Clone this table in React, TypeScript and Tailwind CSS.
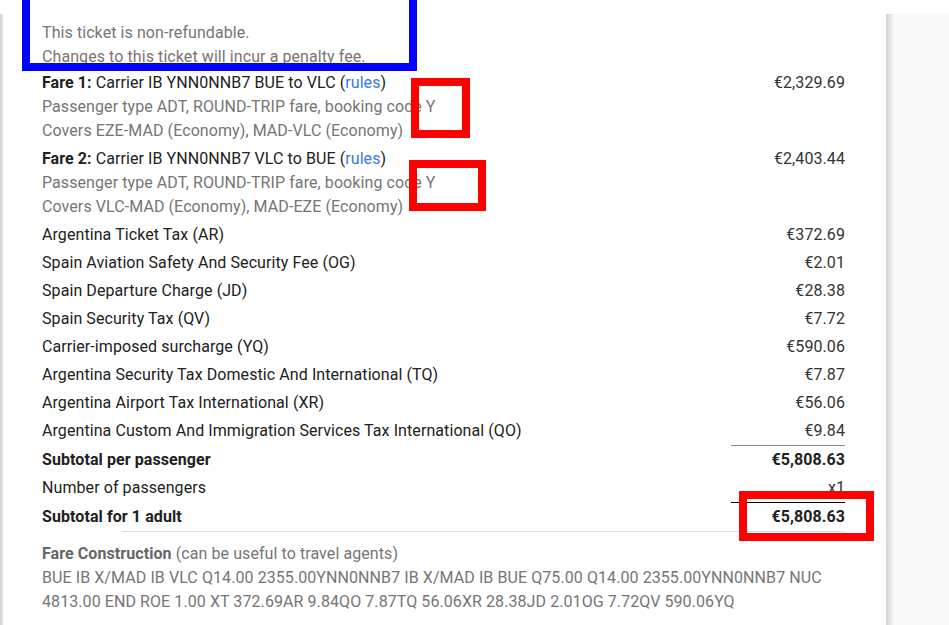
import React from "react";

type Row = { label: string; amount: string };

const TAXES: Row[] = [
  { label: "Argentina Ticket Tax (AR)", amount: "€372.69" },
  { label: "Spain Aviation Safety And Security Fee (OG)", amount: "€2.01" },
  { label: "Spain Departure Charge (JD)", amount: "€28.38" },
  { label: "Spain Security Tax (QV)", amount: "€7.72" },
  { label: "Carrier-imposed surcharge (YQ)", amount: "€590.06" },
  { label: "Argentina Security Tax Domestic And International (TQ)", amount: "€7.87" },
  { label: "Argentina Airport Tax International (XR)", amount: "€56.06" },
  { label: "Argentina Custom And Immigration Services Tax International (QO)", amount: "€9.84" },
];

const FARES = [
  {
    n: 1,
    route: "BUE to VLC",
    amount: "€2,329.69",
    covers: "Covers EZE-MAD (Economy), MAD-VLC (Economy)",
  },
  {
    n: 2,
    route: "VLC to BUE",
    amount: "€2,403.44",
    covers: "Covers VLC-MAD (Economy), MAD-EZE (Economy)",
  },
];

function Fare({ n, route, amount, covers }: (typeof FARES)[number]) {
  return (
    <div className="flex justify-between py-[2px]">
      <div>
        <div className="text-[#212121]">
          <span className="font-bold">Fare {n}:</span> Carrier IB YNN0NNB7 {route} (
          <a className="text-[#3b78e7]">rules</a>)
        </div>
        <div className="text-[#757575]">Passenger type ADT, ROUND-TRIP fare, booking code Y</div>
        <div className="text-[#757575]">{covers}</div>
      </div>
      <div className="text-[#333]">{amount}</div>
    </div>
  );
}

export default function App() {
  return (
    <div className="relative w-[949px] h-[625px] overflow-hidden bg-white font-['Roboto',sans-serif] text-[16px] leading-[24px] tracking-[0.08px]">
      <div className="h-[14px]" />
      <div className="flex h-[611px]">
        <div className="w-[3px] bg-gradient-to-r from-[#d4d4d4] to-[#e4e4e4]" />
        <div className="w-[883px] bg-white pl-[39px] pr-[41px] pt-[7px]">
          {/* notes */}
          <div className="text-[#757575]">
            <div>This ticket is non-refundable.</div>
            <div>Changes to this ticket will incur a penalty fee.</div>
          </div>

          {FARES.map((f) => (
            <Fare key={f.n} {...f} />
          ))}

          {TAXES.map((t) => (
            <div key={t.label} className="flex justify-between py-[2px] text-[#212121]">
              <span>{t.label}</span>
              <span className="text-[#333]">{t.amount}</span>
            </div>
          ))}

          <div className="flex justify-between py-[2px] font-bold text-[#212121] relative">
            <div className="absolute right-0 top-0 w-[114px] border-t border-[#8a8a8a]" />
            <span className="pt-[1px]">Subtotal per passenger</span>
            <span className="pt-[1px]">€5,808.63</span>
          </div>
          <div className="flex justify-between py-[2px] text-[#212121]">
            <span>Number of passengers</span>
            <span className="text-[#333]">x1</span>
          </div>
          <div className="flex justify-between py-[2px] font-bold text-[#212121] relative">
            <div className="absolute right-0 top-0 w-[114px] border-t border-black" />
            <span className="pt-[1px]">Subtotal for 1 adult</span>
            <span className="pt-[1px]">€5,808.63</span>
          </div>
          <div className="ml-[80px] border-t border-[#e0e0e0]" />

          <div className="pt-[10px] text-[#757575]">
            <div>
              <span className="font-bold text-[#666]">Fare Construction</span> (can be useful to travel agents)
            </div>
            <div>BUE IB X/MAD IB VLC Q14.00 2355.00YNN0NNB7 IB X/MAD IB BUE Q75.00 Q14.00 2355.00YNN0NNB7 NUC</div>
            <div>4813.00 END ROE 1.00 XT 372.69AR 9.84QO 7.87TQ 56.06XR 28.38JD 2.01OG 7.72QV 590.06YQ</div>
          </div>
        </div>
        <div className="w-[7px] bg-gradient-to-r from-[#d3d3d3] to-[#f3f3f3]" />
        <div className="flex-1 bg-[#f9f9f9]" />
      </div>

      {/* annotation boxes */}
      <div className="absolute left-[22px] top-[-8px] w-[395px] h-[79px] border-[8px] border-[#0000ff]" />
      <div className="absolute left-[411px] top-[78px] w-[59px] h-[60px] border-[8px] border-[#ff0000]" />
      <div className="absolute left-[409px] top-[160px] w-[77px] h-[51px] border-[8px] border-[#ff0000]" />
      <div className="absolute left-[739px] top-[491px] w-[135px] h-[50px] border-[8px] border-[#ff0000]" />
    </div>
  );
}
